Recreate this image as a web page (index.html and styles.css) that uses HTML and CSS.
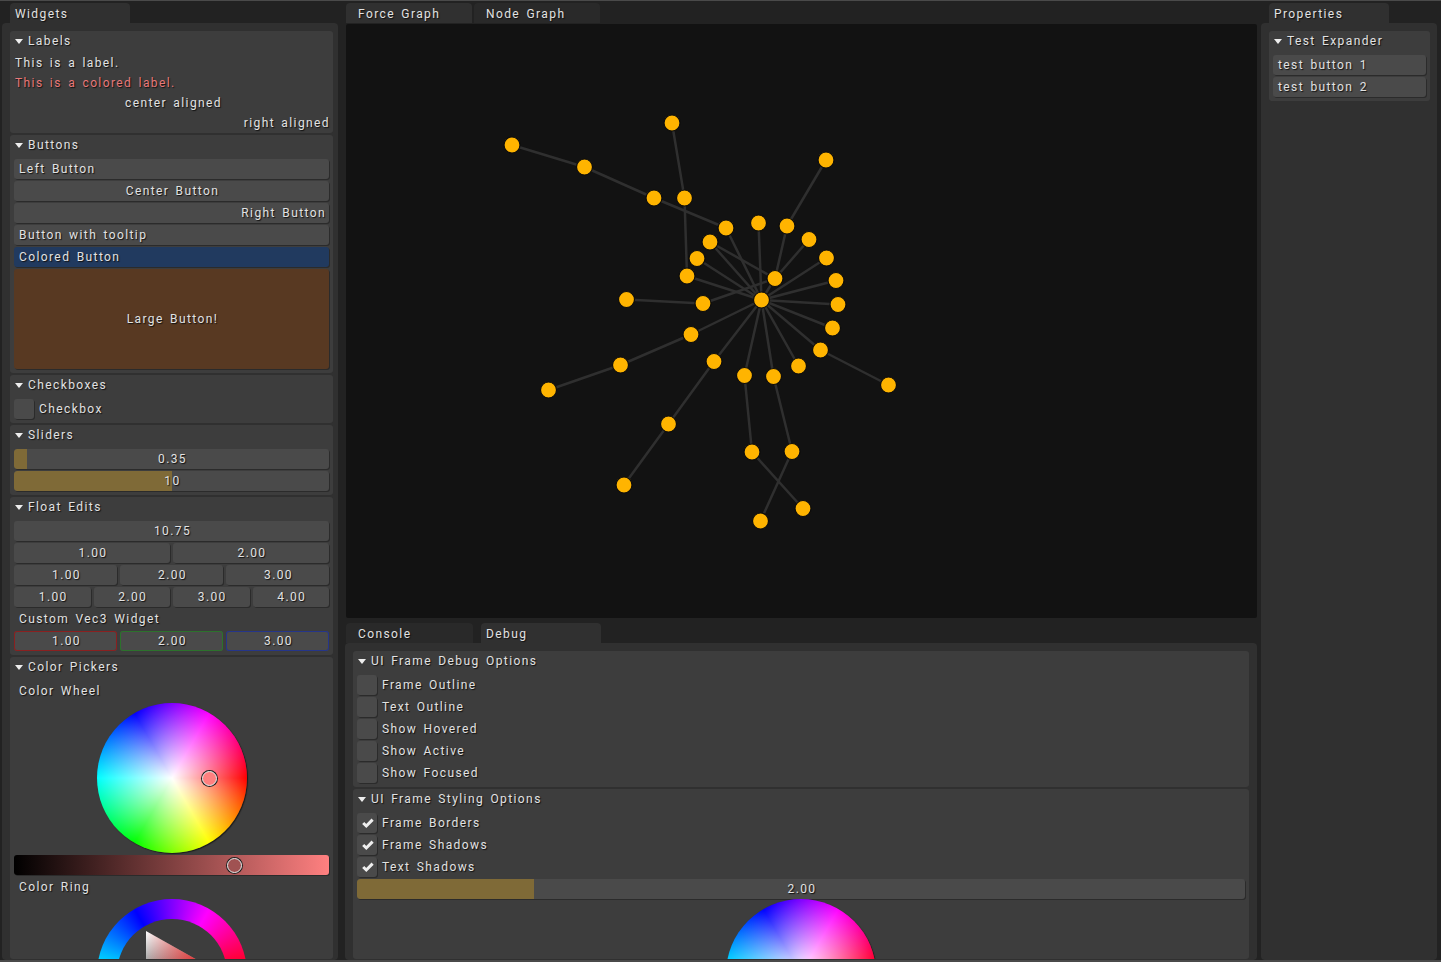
FILE: index.html
```html
<!DOCTYPE html>
<html lang="en">
<head>
<meta charset="utf-8">
<title>Widgets</title>
<link rel="stylesheet" href="styles.css">
</head>
<body>
<div class="app">
  <section class="dock dock-left">
    <div class="tabs tabs-side"><div class="tab active">Widgets</div></div>
    <div class="panel panel-left">
      <div class="card">
        <div class="head"><i class="arrow"></i>Labels</div>
        <div class="labels">
          <div class="label">This is a label.</div>
          <div class="label red">This is a colored label.</div>
          <div class="label center">center aligned</div>
          <div class="label right">right aligned</div>
        </div>
      </div>
      <div class="card">
        <div class="head"><i class="arrow"></i>Buttons</div>
        <div class="body">
          <div class="btn left">Left Button</div>
          <div class="btn">Center Button</div>
          <div class="btn right">Right Button</div>
          <div class="btn left">Button with tooltip</div>
          <div class="btn left blue">Colored Button</div>
          <div class="btn large">Large Button!</div>
        </div>
      </div>
      <div class="card">
        <div class="head"><i class="arrow"></i>Checkboxes</div>
        <div class="body"><div class="check"><span class="box"></span>Checkbox</div></div>
      </div>
      <div class="card">
        <div class="head"><i class="arrow"></i>Sliders</div>
        <div class="body">
          <div class="btn slider"><span class="fill" style="width:4.2%"></span><span class="val">0.35</span></div>
          <div class="btn slider"><span class="fill" style="width:50%"></span><span class="val">10</span></div>
        </div>
      </div>
      <div class="card">
        <div class="head"><i class="arrow"></i>Float Edits</div>
        <div class="body">
          <div class="btn">10.75</div>
          <div class="row"><div class="btn">1.00</div><div class="btn">2.00</div></div>
          <div class="row"><div class="btn">1.00</div><div class="btn">2.00</div><div class="btn">3.00</div></div>
          <div class="row"><div class="btn">1.00</div><div class="btn">2.00</div><div class="btn">3.00</div><div class="btn">4.00</div></div>
          <div class="label indent">Custom Vec3 Widget</div>
          <div class="row"><div class="btn b-red">1.00</div><div class="btn b-green">2.00</div><div class="btn b-blue">3.00</div></div>
        </div>
      </div>
      <div class="card card-last">
        <div class="head"><i class="arrow"></i>Color Pickers</div>
        <div class="body">
          <div class="label indent">Color Wheel</div>
          <div class="wheel">
            <span class="knob knob-wheel"></span>
          </div>
          <div class="valbar"><span class="knob knob-val"></span></div>
          <div class="label indent">Color Ring</div>
          <div class="ring">
            <svg class="tri" width="150" height="150" viewBox="0 0 150 150">
              <defs>
                <linearGradient id="tw" x1="0" y1="0" x2="0" y2="1"><stop offset="0" stop-color="#fff"/><stop offset="1" stop-color="#000"/></linearGradient>
                <linearGradient id="tr" x1="0" y1="0" x2="1" y2="0"><stop offset="0" stop-color="#f00" stop-opacity="0"/><stop offset="1" stop-color="#f00"/></linearGradient>
              </defs>
              <polygon points="49,32 125,75 49,118" fill="url(#tw)"/>
              <polygon points="49,32 125,75 49,118" fill="url(#tr)"/>
            </svg>
          </div>
        </div>
      </div>
    </div>
  </section>

  <section class="dock dock-center">
    <div class="tabs tabs-center">
      <div class="tab active">Force Graph</div>
      <div class="tab">Node Graph</div>
    </div>
    <div class="canvas">
      <svg class="graph" width="911" height="594" viewBox="346 24 911 594">
        <g class="edges">
          <path d="M761.5 300L726 228M761.5 300L758.5 223M761.5 300L775 278.5M761.5 300L710 242M761.5 300L697 258.5M761.5 300L687 276M761.5 300L691 334.5M761.5 300L714 361.5M761.5 300L744.5 375.5M761.5 300L773.5 376.5M761.5 300L798.5 366M761.5 300L820.5 350M761.5 300L832.5 328M761.5 300L838 304.5M761.5 300L836 280.5M761.5 300L826.5 258"/>
          <path d="M775 278.5L787 226M775 278.5L809 239.5M775 278.5L710 242M775 278.5L703 303.5M787 226L826 160M726 228L654 198M654 198L584.5 167M584.5 167L512 145M684.5 198L672 123M684.5 198L687 276M703 303.5L626.5 299.5M691 334.5L620.5 365M620.5 365L548.5 390M714 361.5L668.5 424M668.5 424L624 485M744.5 375.5L752 452M752 452L803 508.5M773.5 376.5L792 451.5M792 451.5L760.5 521M820.5 350L888.5 385"/>
        </g>
        <g class="nodes">
          <circle cx="761.5" cy="300" r="8"/><circle cx="512" cy="145" r="8"/><circle cx="584.5" cy="167" r="8"/><circle cx="672" cy="123" r="8"/><circle cx="654" cy="198" r="8"/><circle cx="684.5" cy="198" r="8"/><circle cx="826" cy="160" r="8"/><circle cx="726" cy="228" r="8"/><circle cx="758.5" cy="223" r="8"/><circle cx="787" cy="226" r="8"/><circle cx="809" cy="239.5" r="8"/><circle cx="710" cy="242" r="8"/><circle cx="697" cy="258.5" r="8"/><circle cx="826.5" cy="258" r="8"/><circle cx="687" cy="276" r="8"/><circle cx="775" cy="278.5" r="8"/><circle cx="836" cy="280.5" r="8"/><circle cx="703" cy="303.5" r="8"/><circle cx="626.5" cy="299.5" r="8"/><circle cx="838" cy="304.5" r="8"/><circle cx="832.5" cy="328" r="8"/><circle cx="691" cy="334.5" r="8"/><circle cx="820.5" cy="350" r="8"/><circle cx="620.5" cy="365" r="8"/><circle cx="714" cy="361.5" r="8"/><circle cx="798.5" cy="366" r="8"/><circle cx="744.5" cy="375.5" r="8"/><circle cx="773.5" cy="376.5" r="8"/><circle cx="548.5" cy="390" r="8"/><circle cx="888.5" cy="385" r="8"/><circle cx="668.5" cy="424" r="8"/><circle cx="752" cy="452" r="8"/><circle cx="792" cy="451.5" r="8"/><circle cx="624" cy="485" r="8"/><circle cx="803" cy="508.5" r="8"/><circle cx="760.5" cy="521" r="8"/>
        </g>
      </svg>
    </div>
    <div class="tabs tabs-bottom">
      <div class="tab tab-console">Console</div>
      <div class="tab active">Debug</div>
    </div>
    <div class="panel panel-bottom">
      <div class="card">
        <div class="head"><i class="arrow"></i>UI Frame Debug Options</div>
        <div class="body">
          <div class="check"><span class="box"></span>Frame Outline</div>
          <div class="check"><span class="box"></span>Text Outline</div>
          <div class="check"><span class="box"></span>Show Hovered</div>
          <div class="check"><span class="box"></span>Show Active</div>
          <div class="check"><span class="box"></span>Show Focused</div>
        </div>
      </div>
      <div class="card card-last">
        <div class="head"><i class="arrow"></i>UI Frame Styling Options</div>
        <div class="body">
          <div class="check"><span class="box"><svg class="tick" width="14" height="12" viewBox="0 0 14 12"><path d="M3.2 6L6.3 9L12.6 2.6"/></svg></span>Frame Borders</div>
          <div class="check"><span class="box"><svg class="tick" width="14" height="12" viewBox="0 0 14 12"><path d="M3.2 6L6.3 9L12.6 2.6"/></svg></span>Frame Shadows</div>
          <div class="check"><span class="box"><svg class="tick" width="14" height="12" viewBox="0 0 14 12"><path d="M3.2 6L6.3 9L12.6 2.6"/></svg></span>Text Shadows</div>
          <div class="btn slider"><span class="fill" style="width:19.9%"></span><span class="val">2.00</span></div>
          <div class="wheel wheel-flush"></div>
        </div>
      </div>
    </div>
  </section>

  <section class="dock dock-right">
    <div class="tabs tabs-side"><div class="tab active">Properties</div></div>
    <div class="panel panel-right">
      <div class="card">
        <div class="head"><i class="arrow"></i>Test Expander</div>
        <div class="body">
          <div class="btn left">test button 1</div>
          <div class="btn left">test button 2</div>
        </div>
      </div>
    </div>
  </section>
</div>
</body>
</html>
```

FILE: styles.css
```css
* { box-sizing: border-box; }
html, body { margin: 0; height: 100%; overflow: hidden; }
body {
  background: #222;
  font: 12px/20px Roboto, sans-serif;
  letter-spacing: 1.4px;
  word-spacing: 2px;
  color: #e2e2e2;
  text-shadow: 1px 1px 1px #111;
}
.app {
  width: 1441px;
  height: 962px;
  display: flex;
  border-top: 1px solid #4a4a4a;
  border-bottom: 2px solid #4a4a4a;
  overflow: hidden;
}
.dock { display: flex; flex-direction: column; min-height: 0; }
.dock-left { width: 336px; margin-left: 2px; }
.dock-center { width: 912px; margin-left: 7px; }
.dock-right { width: 176px; margin-left: 4px; }

.tabs { display: flex; height: 22px; padding-top: 2px; flex: none; gap: 2px; }
.tabs-side { padding-left: 8px; }
.tabs-center { padding-left: 1px; }
.tabs-bottom { height: 25px; padding-top: 5px; padding-left: 1px; }
.tab {
  width: 120px;
  height: 20px;
  padding-left: 5px;
  line-height: 22px;
  background: #292929;
  border-radius: 4px 4px 0 0;
}
.tab.active { background: #303030; }
.tabs-center .tab { width: 126px; padding-left: 12px; }
.tabs-bottom .tab { background: #303030; width: 120px; padding-left: 5px; }
.tabs-bottom .tab-console { width: 127px; padding-left: 12px; background: #292929; margin-right: 6px; }

.panel {
  flex: 1;
  min-height: 0;
  background: #303030;
  border-radius: 4px;
  padding: 8px 8px 1px;
  overflow: hidden;
  display: flex;
  flex-direction: column;
  gap: 2px;
}
.panel-left { padding-right: 5px; }
.panel-right { padding-right: 7px; }

.card { flex: none; background: #3d3d3d; border-radius: 3px; }
.card-last { flex: 1; min-height: 0; overflow: hidden; }
.head { height: 20px; padding-left: 18px; position: relative; }
.arrow {
  position: absolute;
  left: 5px;
  top: 8px;
  border-left: 4px solid transparent;
  border-right: 4px solid transparent;
  border-top: 5px solid #eee;
}
.labels { height: 82px; padding: 2px 3px 0 5px; }
.label { height: 20.1px; }
.red { color: #e87878; }
.center { text-align: center; padding-left: 2px; }
.right { text-align: right; }
.indent { height: 20px; padding-left: 5px; }
.body { padding: 4px; display: flex; flex-direction: column; gap: 2px; }

.btn {
  position: relative;
  flex: 1 0 20px;
  height: 20px;
  text-align: center;
  padding-left: 2px;
  background: #4a4a4a;
  border-radius: 3px;
  box-shadow: 1px 1px 0 #2b2b2b;
  overflow: hidden;
}
.body > .btn { flex: none; }
.btn.left { text-align: left; padding-left: 5px; }
.btn.right { text-align: right; padding-right: 3px; }
.btn.blue { background: #213a5f; }
.btn.large { height: 100px; line-height: 100px; background: #583922; }
.row { display: flex; gap: 3px; }
.row .btn { flex: 1 1 0; min-width: 0; }
.b-red { box-shadow: inset 0 0 0 1px #8a2020; }
.b-green { box-shadow: inset 0 0 0 1px #2c722c; }
.b-blue { box-shadow: inset 0 0 0 1px #25358a; }
.fill { position: absolute; left: 0; top: 0; bottom: 0; background: #7f6a37; border-radius: 3px 0 0 3px; }
.val { position: relative; }

.check { display: flex; align-items: center; height: 20px; }
.box {
  width: 20px;
  height: 20px;
  margin-right: 5px;
  background: #4a4a4a;
  border-radius: 3px;
  box-shadow: 1px 1px 0 #2b2b2b;
  display: flex;
  align-items: center;
  justify-content: center;
}
.tick { fill: none; stroke: #eee; stroke-width: 3; }

.wheel, .ring {
  position: relative;
  flex: none;
  width: 150px;
  height: 150px;
  align-self: center;
  border-radius: 50%;
  box-shadow: 1px 1px 1px #1c1c1c;
}
.wheel {
  background:
    radial-gradient(circle closest-side, #fff, rgba(255,255,255,0)),
    conic-gradient(from 90deg, #f00, #ff0, #0f0, #0ff, #00f, #f0f, #f00);
}
.wheel-flush { margin-top: -2px; }
.ring {
  background: conic-gradient(from 90deg, #f00, #ff0, #0f0, #0ff, #00f, #f0f, #f00);
  box-shadow: none;
}
.ring::after {
  content: "";
  position: absolute;
  inset: 20px;
  border-radius: 50%;
  background: #3d3d3d;
}
.tri { position: absolute; left: 0; top: 0; z-index: 1; }
.valbar {
  position: relative;
  flex: none;
  height: 20px;
  border-radius: 3px;
  background: linear-gradient(to right, #000, #ff8080);
  box-shadow: 1px 1px 0 #2b2b2b;
}
.knob {
  position: absolute;
  width: 15px;
  height: 15px;
  border-radius: 50%;
  border: 1.5px solid #eee;
  box-shadow: 0 0 0 1px #222;
}
.knob-wheel { left: 105px; top: 67.5px; background: #ff8080; }
.knob-val { left: 213px; top: 2.5px; background: #a05252; }

.canvas { height: 594px; flex: none; background: #121212; margin: 1px 0 0 1px; border-radius: 2px; }
.graph { display: block; }
.edges path { fill: none; stroke: #2f2f2f; stroke-width: 2.5; }
.nodes circle { fill: #ffb400; stroke: #0c0c0c; stroke-width: 1.2; }
```
